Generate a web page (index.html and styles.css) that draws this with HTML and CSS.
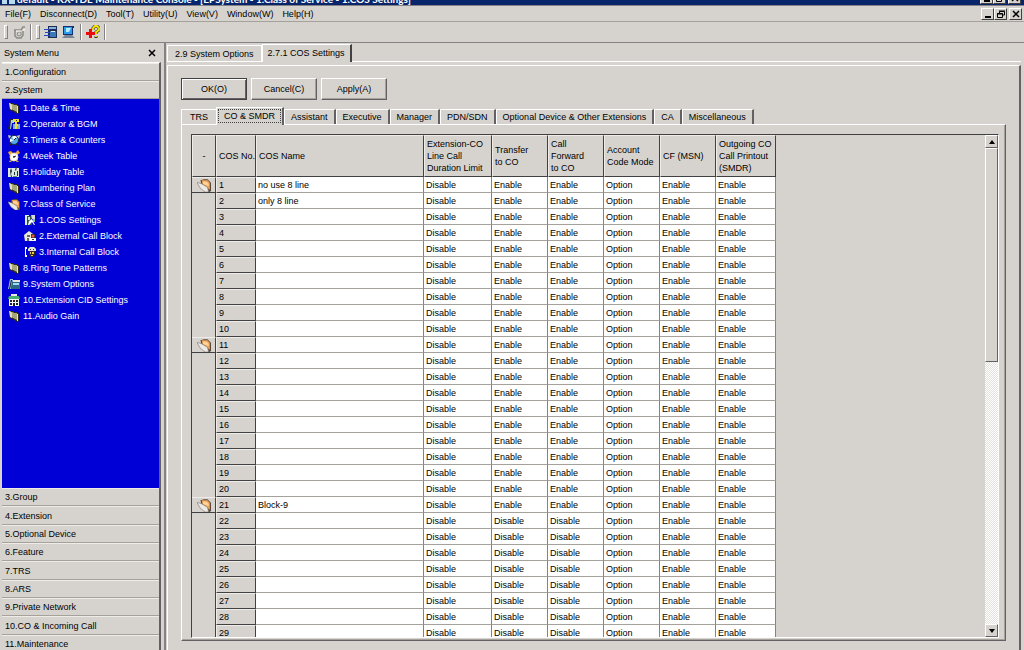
FILE: index.html
```html
<!DOCTYPE html>
<html lang="en">
<head>
    <meta charset="UTF-8">
    <meta name="viewport" content="width=device-width, initial-scale=1.0">
    <title>Maintenance Console</title>
    <link rel="stylesheet" href="styles.css">
</head>
<body>

    <!-- Shared icons -->
    <svg class="defs" aria-hidden="true">
        <symbol id="folder" viewBox="0 0 12 12">
            <path d="M1 1h4l1 1h3l2 2v7l-2 1-3-2-4-2z" fill="#2c2a18"/>
            <path d="M2 2h3l1 1h3v7L7 9 3 7z" fill="#a7a67c"/>
            <path d="M1 1h1l2 2v5L2 7z" fill="#e0dfbc"/>
            <path d="M9 4h1v7H9z" fill="#e6e6d4"/>
        </symbol>
        <symbol id="folder-open" viewBox="0 0 12 12">
            <path d="M3 2l3-1h3l3 3v7l-1 1h-2L4 7z" fill="#5a4a40"/>
            <path d="M4 2h5l2 2v6L5 6z" fill="#f0a050"/>
            <path d="M5 3h3l2 2v2L5 5z" fill="#ffd29a"/>
            <path d="M0 4h1l3 1 5 3 1 4H7L3 9z" fill="#ece8e2" stroke="#77706a" stroke-width=".5"/>
        </symbol>
        <symbol id="operator" viewBox="0 0 12 12">
            <path d="M2 1h3L3 11H0z" fill="#222"/>
            <path d="M3 2h3v3H4L3 11H2z" fill="#9fd4e8"/>
            <path d="M5 6h7v5H5z" fill="#7cb6c8"/>
            <path d="M5 1h6v3H9v2h1v2H9v3H7V4H5z" fill="#f4d83c"/>
            <path d="M8 2h1v1H8z" fill="#333"/>
        </symbol>
        <symbol id="timer" viewBox="0 0 12 12">
            <path d="M0 1l4 1-3 3zM12 1L8 2l3 3z" fill="#c9c9c9"/>
            <path d="M2 9l-1 3 3-1zM9 9l2 3-3-1z" fill="#222"/>
            <circle cx="6" cy="6" r="4.5" fill="#57a8e6" stroke="#1d2d40"/>
            <path d="M6 6l3-3a4 4 0 0 0-5 0zM6 6L2 5v3z" fill="#fff"/>
            <path d="M6 6l2-2" stroke="#123"/>
        </symbol>
        <symbol id="week" viewBox="0 0 12 12">
            <path d="M0 2l3-1 2 2-3 3zM7 3l3-3 2 3-3 2z" fill="#f4a436"/>
            <path d="M2 10l-1 2h3zM9 10l2 2H8z" fill="#caa23a"/>
            <circle cx="6" cy="7" r="4" fill="#fff" stroke="#f0dca8"/>
            <path d="M5 7l3-1M6 8V6" fill="none" stroke="#222"/>
        </symbol>
        <symbol id="holiday" viewBox="0 0 12 12">
            <path d="M0 2h11v9H0z" fill="#dce8e4"/>
            <path d="M3 2l1 3-1 3 1 3H3L2 5zM8 1h1L8 5 7 4zM6 6h1v3H6zM9 5h1v5H9z" fill="#233"/>
            <path d="M5 10h4v1H5z" fill="#4ca37c"/>
        </symbol>
        <symbol id="cos" viewBox="0 0 12 12">
            <path d="M1 1h4v1H3v9H1z" fill="#d8efe6"/>
            <path d="M3 2h5v9H3z" fill="#2f4f4a"/>
            <path d="M4 3h2v3H4zM7 1h4v4H8z" fill="#d9d9d9"/>
            <path d="M5 7l3-2 3 6h-1L8 8l-3 3H4z" fill="#fff"/>
            <path d="M9 5h2v3H9z" fill="#7cc3a4"/>
        </symbol>
        <symbol id="external" viewBox="0 0 12 12">
            <path d="M0 5l5-4 4 3v7H1z" fill="#ece8d8"/>
            <path d="M3 5h3v2H3zM3 8h2v3H3z" fill="#666"/>
            <path d="M7 4h4v4H7z" fill="#333"/>
            <circle cx="9" cy="6" r="1.5" fill="#e8524a"/>
            <path d="M6 8h6v3H6z" fill="#f7f7f7"/>
            <path d="M8 9h2v1H8z" fill="#333"/>
        </symbol>
        <symbol id="internal" viewBox="0 0 12 12">
            <path d="M3 1H1v10h2V9H2V3h1z" fill="#fff"/>
            <path d="M4 3l2-2h4l2 2v2H4z" fill="#e4e4dc"/>
            <path d="M6 3h1v1H6zM9 3h1v1H9z" fill="#333"/>
            <path d="M5 5h6v4l-2 2H7L5 9z" fill="#2b2b22"/>
            <path d="M6 6h1v2H6zM8 6h2v2H8zM7 9h2v1H7z" fill="#f5c93c"/>
        </symbol>
        <symbol id="options" viewBox="0 0 12 12">
            <path d="M2 1h3v1L3 11H0z" fill="#8ec3da"/>
            <path d="M3 2h1L2 11H1z" fill="#1c1c24"/>
            <path d="M5 2h7v2H5z" fill="#e8e8d8"/>
            <path d="M4 4h8v7H3z" fill="#2c6a86"/>
            <path d="M5 5h6v2H5z" fill="#9adcf0"/>
        </symbol>
        <symbol id="cid" viewBox="0 0 12 12">
            <path d="M3 0h6v2H3z" fill="#e8e8e8"/>
            <path d="M1 2h10l1 3H0z" fill="#46b06c"/>
            <path d="M1 5h10v7H1z" fill="#f4f4f4"/>
            <path d="M2 6h2v2H2zM5 6h2v2H5zM8 6h2v2H8zM2 9h2v2H2zM5 9h2v3H5zM8 9h2v2H8z" fill="#222"/>
        </symbol>
        <symbol id="close" viewBox="0 0 8 8">
            <path d="M1 1l6 6M7 1L1 7" stroke="#000" stroke-width="1.5"/>
        </symbol>
        <symbol id="restore" viewBox="0 0 8 8">
            <path d="M2.5 3V1.500H7.500V5H6M2 1h6" fill="none" stroke="#000"/>
            <path d="M.5 3.500h5v4h-5zM0 4h6" fill="none" stroke="#000"/>
        </symbol>
        <symbol id="minimize" viewBox="0 0 8 8">
            <path d="M1 6h6v2H1z" fill="#000"/>
        </symbol>
    </svg>

    <header class="title-bar">
        <svg class="app-icon" viewBox="0 0 14 10"><path d="M2 0h8v4H2z" fill="#6fb8e8"/><path d="M0 4h5v5H0zM7 5h6v4H7z" fill="#b9d9ee"/></svg>
        <span class="title-text">default - KX-TDE Maintenance Console - [EPSystem - 1.Class of Service - 1.COS Settings]</span>
        <div class="window-buttons">
            <button aria-label="Minimize"><svg><use href="#minimize"/></svg></button>
            <button aria-label="Restore"><svg><use href="#restore"/></svg></button>
            <button class="apart" aria-label="Close"><svg><use href="#close"/></svg></button>
        </div>
    </header>

    <div class="menu-bar">
        <nav class="menu">
            <button>File(F)</button>
            <button>Disconnect(D)</button>
            <button>Tool(T)</button>
            <button>Utility(U)</button>
            <button>View(V)</button>
            <button>Window(W)</button>
            <button>Help(H)</button>
        </nav>
        <div class="window-buttons">
            <button aria-label="Minimize window"><svg><use href="#minimize"/></svg></button>
            <button aria-label="Restore window"><svg><use href="#restore"/></svg></button>
            <button class="apart" aria-label="Close window"><svg><use href="#close"/></svg></button>
        </div>
    </div>

    <div class="toolbar">
        <span class="grip"></span>
        <button aria-label="Connect">
            <svg viewBox="0 0 14 14"><path d="M2 5h7l2-3h2M3 5v6l2 2h4l2-3V6" fill="none" stroke="#8b8b84" stroke-width="1.500"/><path d="M6 7h3v3l-2 1-2-1z" fill="none" stroke="#8b8b84"/><path d="M4 6h5M12 4v2" stroke="#fff"/></svg>
        </button>
        <span class="line"></span>
        <span class="grip"></span>
        <button aria-label="System data">
            <svg viewBox="0 0 14 14"><path d="M4 1h9v12H4z" fill="#202c54"/><path d="M5 2h7v2H5z" fill="#86b4e0"/><path d="M6 6h6v6H6z" fill="#3c78b8"/><path d="M0 4h6v1H0zM1 7h5v1H1zM0 10h6v1H0z" fill="#2846c8"/><path d="M7 6h4v1H7z" fill="#d8ecf8"/></svg>
        </button>
        <button aria-label="Computer">
            <svg viewBox="0 0 14 14"><path d="M1 1h11v9H1z" fill="#17306c"/><path d="M2 2h8v7H2z" fill="#2c9ce8"/><path d="M4 3h5L7 7H4z" fill="#b6ecff"/><path d="M3 10h7l3 3H0z" fill="#7a8494"/><path d="M11 3h2v8h-2z" fill="#c7d2dc"/></svg>
        </button>
        <span class="line"></span>
        <button aria-label="Help">
            <svg viewBox="0 0 14 14"><path d="M7 5V3l2-2h2l2 2v2l-3 2v2M10 11v2" fill="none" stroke="#35341c" stroke-width="3"/><path d="M7 5V3l2-2h2l2 2v2l-3 2v2M10 11v1" fill="none" stroke="#f8e800" stroke-width="1.800"/><path d="M3 4h3v3h3v3H6v3H3v-3H0V7h3z" fill="#e80c0c"/></svg>
        </button>
        <span class="line"></span>
    </div>

    <div class="main">
        <aside class="sidebar">
            <div class="sidebar-head">
                <span>System Menu</span>
                <button aria-label="Close menu"><svg><use href="#close"/></svg></button>
            </div>
            <div class="sidebar-body">
                <div class="sections">
                    <button>1.Configuration</button>
                    <button>2.System</button>
                </div>
                <ul class="tree">
                    <li><a href="#"><svg><use href="#folder"/></svg>1.Date &amp; Time</a></li>
                    <li><a href="#"><svg><use href="#operator"/></svg>2.Operator &amp; BGM</a></li>
                    <li><a href="#"><svg><use href="#timer"/></svg>3.Timers &amp; Counters</a></li>
                    <li><a href="#"><svg><use href="#week"/></svg>4.Week Table</a></li>
                    <li><a href="#"><svg><use href="#holiday"/></svg>5.Holiday Table</a></li>
                    <li><a href="#"><svg><use href="#folder"/></svg>6.Numbering Plan</a></li>
                    <li><a href="#"><svg><use href="#folder-open"/></svg>7.Class of Service</a>
                        <ul>
                            <li><a href="#"><svg><use href="#cos"/></svg>1.COS Settings</a></li>
                            <li><a href="#"><svg><use href="#external"/></svg>2.External Call Block</a></li>
                            <li><a href="#"><svg><use href="#internal"/></svg>3.Internal Call Block</a></li>
                        </ul>
                    </li>
                    <li><a href="#"><svg><use href="#folder"/></svg>8.Ring Tone Patterns</a></li>
                    <li><a href="#"><svg><use href="#options"/></svg>9.System Options</a></li>
                    <li><a href="#"><svg><use href="#cid"/></svg>10.Extension CID Settings</a></li>
                    <li><a href="#"><svg><use href="#folder"/></svg>11.Audio Gain</a></li>
                </ul>
                <div class="sections sections-bottom">
                    <button>3.Group</button>
                    <button>4.Extension</button>
                    <button>5.Optional Device</button>
                    <button>6.Feature</button>
                    <button>7.TRS</button>
                    <button>8.ARS</button>
                    <button>9.Private Network</button>
                    <button>10.CO &amp; Incoming Call</button>
                    <button>11.Maintenance</button>
                </div>
            </div>
        </aside>

        <main class="workspace">
            <div class="page-tabs">
                <button>2.9 System Options</button>
                <button class="active">2.7.1 COS Settings</button>
            </div>

            <div class="page">
                <div class="actions">
                    <button class="default">OK(O)</button>
                    <button>Cancel(C)</button>
                    <button>Apply(A)</button>
                </div>

                <div class="tabs">
                    <button>TRS</button>
                    <button class="active"><span>CO &amp; SMDR</span></button>
                    <button>Assistant</button>
                    <button>Executive</button>
                    <button>Manager</button>
                    <button>PDN/SDN</button>
                    <button>Optional Device &amp; Other Extensions</button>
                    <button>CA</button>
                    <button>Miscellaneous</button>
                </div>

                <div class="tab-panel">
                    <div class="grid">
                        <div class="grid-view">
                            <table>
                                <colgroup>
                                    <col class="col-mark">
                                    <col class="col-no">
                                    <col class="col-name">
                                    <col class="col-limit">
                                    <col class="col-value">
                                    <col class="col-value">
                                    <col class="col-value">
                                    <col class="col-value">
                                    <col class="col-print">
                                </colgroup>
                                <thead>
                                    <tr>
                                        <th class="mark">-</th>
                                        <th>COS No.</th>
                                        <th>COS Name</th>
                                        <th>Extension-CO<br>Line Call<br>Duration Limit</th>
                                        <th>Transfer<br>to CO</th>
                                        <th>Call<br>Forward<br>to CO</th>
                                        <th>Account<br>Code Mode</th>
                                        <th>CF (MSN)</th>
                                        <th>Outgoing CO<br>Call Printout<br>(SMDR)</th>
                                    </tr>
                                </thead>
                                <tbody id="cosRows"></tbody>
                            </table>
                        </div>
                        <div class="scrollbar">
                            <button aria-label="Scroll up"><svg viewBox="0 0 6 4"><path d="M3 0l3 4H0z"/></svg></button>
                            <div class="track"><div class="thumb"></div></div>
                            <button aria-label="Scroll down"><svg viewBox="0 0 6 4"><path d="M0 0h6L3 4z"/></svg></button>
                        </div>
                    </div>
                </div>
            </div>
        </main>
    </div>

    <script>
        const names = { 1: "no use 8 line", 2: "only 8 line", 21: "Block-9" };
        const cosRows = document.getElementById("cosRows");
        let html = "";

        for (let no = 1; no <= 29; no++) {
            const group = no % 10 === 1;
            const transfer = no <= 21 ? "Enable" : "Disable";
            const values = [names[no] || "", "Disable", transfer, transfer, "Option", "Enable", "Enable"];

            html += `<tr><td class="fold${group ? " group" : ""}">${group ? '<svg><use href="#folder-open"/></svg>' : ""}</td>`;
            html += `<th scope="row">${no}</th>`;
            values.forEach(value => {
                html += `<td>${value}</td>`;
            });
            html += "</tr>";
        }

        cosRows.innerHTML = html;
    </script>

</body>
</html>
```
FILE: styles.css
```css
/* General Styles */
* {
    box-sizing: border-box;
}

body {
    margin: 0;
    height: 100vh;
    overflow: hidden;
    display: flex;
    flex-direction: column;
    font-family: "Liberation Sans", Arial, sans-serif;
    font-size: 9px;
    line-height: 12px;
    color: #000;
    background: #d6d3ce;
}

button {
    margin: 0;
    padding: 0;
    border: none;
    background: #d6d3ce;
    font: inherit;
    color: inherit;
    white-space: nowrap;
}

svg {
    display: block;
    flex: none;
    width: 12px;
    height: 12px;
}

.defs {
    display: none;
}

/* Title bar */
.title-bar {
    flex: none;
    display: flex;
    align-items: flex-end;
    height: 6px;
    padding: 0 3px 0 2px;
    overflow: hidden;
    color: #fff;
    background: #08246b;
    border-bottom: 1px solid #848284;
}

.app-icon {
    width: 14px;
    height: 10px;
    margin-right: 1px;
}

.title-text {
    flex: 1;
    font-family: Lato, sans-serif;
    font-size: 10px;
    font-weight: bold;
    line-height: 12px;
    white-space: nowrap;
}

.window-buttons {
    display: flex;
}

.window-buttons button {
    display: flex;
    align-items: center;
    justify-content: center;
    width: 13px;
    height: 12px;
    border: 1px solid;
    border-color: #fff #424142 #424142 #fff;
}

.window-buttons .apart {
    margin-left: 2px;
}

.window-buttons svg {
    width: 8px;
    height: 8px;
}

.title-bar .window-buttons {
    padding-bottom: 1px;
}

/* Menu and toolbar */
.menu-bar {
    flex: none;
    display: flex;
    align-items: center;
    justify-content: space-between;
    height: 16px;
    padding: 0 2px 0 5px;
    border-bottom: 1px solid #a5a29c;
}

.menu {
    display: flex;
    gap: 9px;
}

.toolbar {
    flex: none;
    display: flex;
    align-items: center;
    gap: 4px;
    height: 21px;
    padding-left: 4px;
    border-bottom: 1px solid #848284;
}

.toolbar svg {
    width: 14px;
    height: 14px;
}

.grip {
    width: 4px;
    height: 14px;
    border: 1px solid;
    border-color: #fff #848284 #848284 #fff;
}

.line {
    width: 2px;
    height: 16px;
    border-left: 1px solid #848284;
    border-right: 1px solid #fff;
}

.main {
    flex: 1;
    display: flex;
    min-height: 0;
}

/* Sidebar */
.sidebar {
    flex: none;
    display: flex;
    flex-direction: column;
    width: 166px;
    padding-left: 2px;
    border-right: 2px solid #848284;
}

.sidebar-head {
    flex: none;
    display: flex;
    align-items: center;
    justify-content: space-between;
    height: 19px;
    padding: 0 8px 0 2px;
}

.sidebar-head svg {
    width: 8px;
    height: 8px;
}

.sidebar-body {
    flex: 1;
    display: flex;
    flex-direction: column;
    min-height: 0;
    margin-right: 3px;
    border-top: 1px solid #fff;
    border-right: 2px solid #636163;
}

.sections {
    flex: none;
    display: flex;
    flex-direction: column;
}

.sections button {
    flex: none;
    height: 18px;
    padding-left: 3px;
    text-align: left;
    border-top: 1px solid #efebe7;
    border-bottom: 1px solid #a5a29c;
}

.sections-bottom {
    height: 162px;
    overflow: hidden;
}

.sections-bottom button:nth-child(3n+2) {
    height: 19px;
}

.tree,
.tree ul {
    margin: 0;
    padding: 0;
    list-style: none;
}

.tree {
    flex: 1;
    min-height: 0;
    padding: 1px 0 0 6px;
    background: #0000d6;
}

.tree ul {
    padding-left: 16px;
}

.tree a {
    display: flex;
    align-items: center;
    gap: 3px;
    height: 16px;
    color: #fff;
    text-decoration: none;
    white-space: nowrap;
}

/* Page tabs */
.workspace {
    flex: 1;
    display: flex;
    flex-direction: column;
    min-width: 0;
    padding: 0 3px 0 1px;
}

.page-tabs {
    flex: none;
    display: flex;
    align-items: flex-end;
    height: 19px;
    border-bottom: 1px solid #fff;
}

.page-tabs button {
    height: 16px;
    padding: 0 7px;
    border: 1px solid #fff;
    border-bottom: none;
}

.page-tabs .active {
    height: 18px;
    margin-bottom: -1px;
    padding: 0 5px 1px;
    border-right: 2px solid #424142;
}

.page {
    flex: 1;
    display: flex;
    flex-direction: column;
    min-height: 0;
    margin-top: 3px;
    padding: 12px 13px 9px;
    border-top: 1px solid #fff;
    border-left: 1px solid #fff;
    border-right: 2px solid #636163;
}

.actions {
    flex: none;
    display: flex;
    gap: 4px;
}

.actions button {
    width: 66px;
    height: 22px;
    border: 1px solid;
    border-color: #fff #636163 #636163 #fff;
    box-shadow: inset -1px -1px #a5a29c;
}

.actions .default {
    border-color: #424142;
    box-shadow: inset 1px 1px #fff, inset -1px -1px #636163;
}

/* Settings tabs */
.tabs {
    flex: none;
    display: flex;
    align-items: flex-end;
    height: 24px;
}

.tabs button {
    height: 15px;
    padding: 0 6px;
    border: 1px solid #fff;
    border-bottom: none;
    border-right: 2px solid #636163;
}

.tabs button:first-child {
    padding: 0 8px;
    border-right: none;
}

.tabs .active {
    height: 18px;
    margin-bottom: -1px;
    padding: 1px 1px 2px;
    z-index: 1;
}

.tabs .active span {
    display: block;
    padding: 0 5px;
    border: 1px dotted #424142;
}

.tab-panel {
    flex: 1;
    display: flex;
    min-height: 0;
    padding: 9px 6px 2px 9px;
    border: 1px solid;
    border-color: #fff #636163 #636163 #fff;
    box-shadow: inset -1px -1px #a5a29c;
}

/* Grid */
.grid {
    flex: 1;
    display: flex;
    min-width: 0;
    border: 1px solid;
    border-color: #424142 #fff #fff #424142;
}

.grid-view {
    flex: 1;
    min-width: 0;
    overflow: hidden;
}

table {
    width: 584px;
    table-layout: fixed;
    border-collapse: separate;
    border-spacing: 0;
}

.col-mark {
    width: 24px;
}

.col-no {
    width: 40px;
}

.col-name {
    width: 168px;
}

.col-limit {
    width: 68px;
}

.col-value {
    width: 56px;
}

.col-print {
    width: 60px;
}

th,
td {
    height: 16px;
    padding: 0 2px;
    text-align: left;
    font-weight: normal;
    white-space: nowrap;
}

th {
    border: 1px solid;
    border-color: #efebe7 #424142 #424142 #efebe7;
}

thead th {
    height: 42px;
}

thead .mark {
    text-align: center;
}

td {
    background: #fff;
    border-right: 1px solid #848284;
    border-bottom: 1px solid #a5a29c;
}

.fold {
    padding: 0 5px;
    background: #d6d3ce;
    border-right-color: #424142;
    border-bottom: none;
}

.group {
    border-top: 1px solid #efebe7;
    border-bottom: 1px solid #424142;
}

.group svg {
    width: 14px;
    height: 14px;
}

/* Scrollbar */
.scrollbar {
    flex: none;
    display: flex;
    flex-direction: column;
    width: 13px;
}

.scrollbar button,
.thumb {
    border: 1px solid;
    border-color: #fff #636163 #636163 #fff;
    background: #d6d3ce;
}

.scrollbar button {
    flex: none;
    display: flex;
    align-items: center;
    justify-content: center;
    height: 13px;
}

.scrollbar svg {
    width: 6px;
    height: 4px;
}

.track {
    flex: 1;
    background: repeating-conic-gradient(#fff 0% 25%, #e2e0dc 0% 50%) 0 0 / 2px 2px;
}

.thumb {
    height: 45%;
}
```
